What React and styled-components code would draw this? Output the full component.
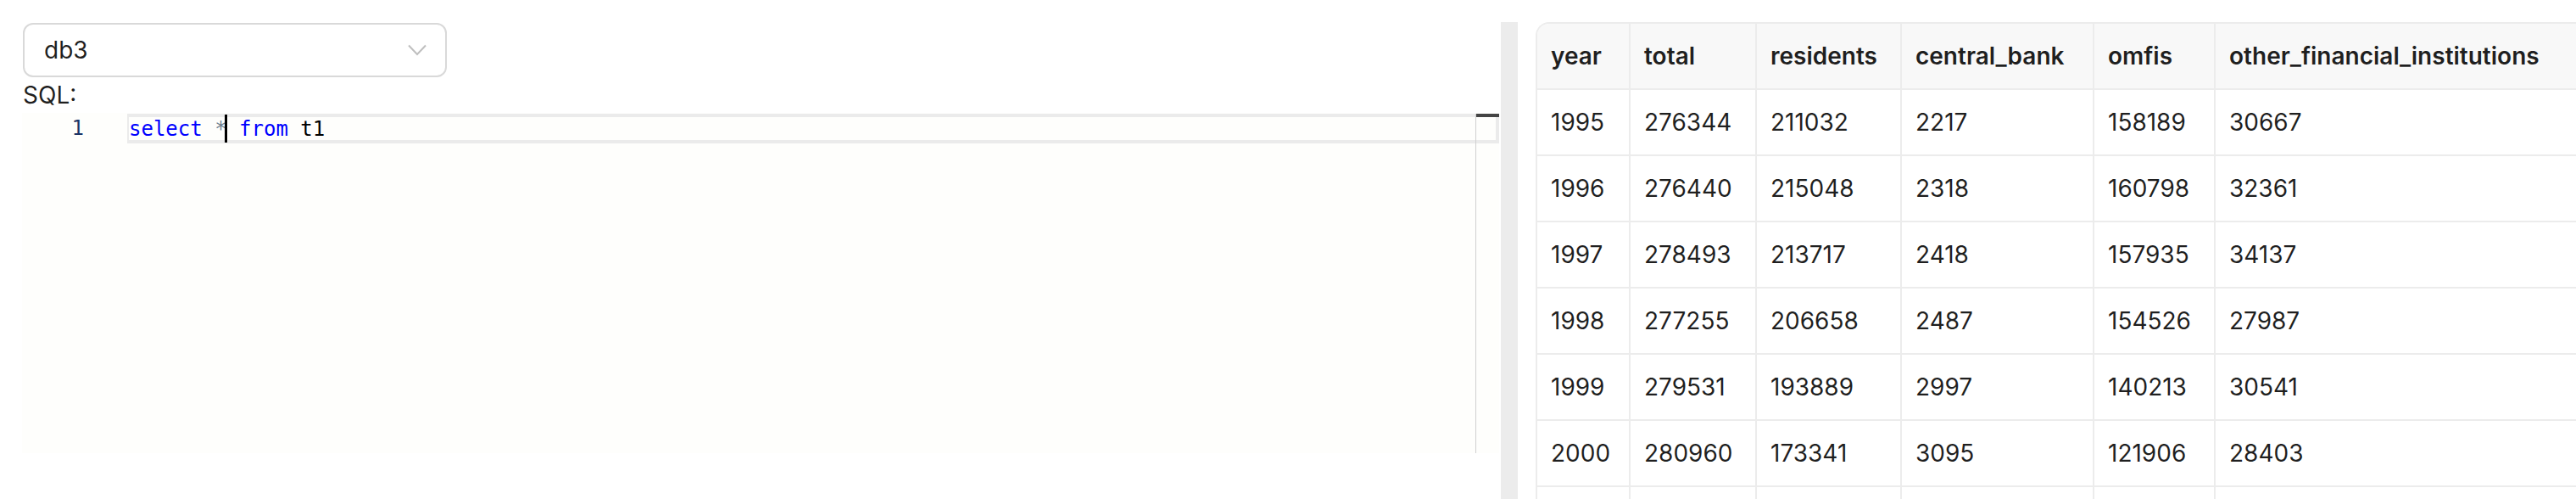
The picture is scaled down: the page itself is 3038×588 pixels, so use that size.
import React from 'react';
import styled, { createGlobalStyle } from 'styled-components';

const GlobalStyle = createGlobalStyle`
  html, body {
    margin: 0;
    padding: 0;
    background: #fff;
  }
  body {
    font-family: Inter, "Liberation Sans", sans-serif;
    color: rgba(0, 0, 0, 0.88);
  }
`;

const Page = styled.div`
  display: flex;
  width: 3038px;
  height: 588px;
  padding-top: 26px;
  box-sizing: border-box;
  overflow: hidden;
`;

const LeftPane = styled.div`
  width: 1770px;
  flex-shrink: 0;
  padding: 0 2px 0 26px;
  box-sizing: border-box;
  display: flex;
  flex-direction: column;
`;

const Select = styled.div`
  width: 500px;
  height: 64px;
  margin: 1px 0 0 1px;
  padding: 0 22px 0 23px;
  box-sizing: border-box;
  border: 2px solid #d9d9d9;
  border-radius: 12px;
  display: flex;
  align-items: center;
  justify-content: space-between;
  font-size: 28px;
  color: rgba(0, 0, 0, 0.88);
`;

const Label = styled.div`
  font-size: 28px;
  line-height: 42px;
  margin-left: 1px;
`;

const Editor = styled.div`
  display: flex;
  height: 400px;
  padding-top: 1px;
  background: #fefefc;
  font-family: "DejaVu Sans Mono", "Liberation Mono", monospace;
  font-size: 24px;
`;

const Gutter = styled.div`
  width: 124px;
  padding-right: 51px;
  box-sizing: border-box;
  text-align: right;
  color: #1c3466;
`;

const GutterCell = styled.div`
  height: 35px;
  line-height: 35px;
`;

const CodeArea = styled.div`
  flex: 1;
  position: relative;
`;

const Line = styled.div`
  height: 35px;
  box-sizing: border-box;
  display: flex;
  align-items: center;
  white-space: pre;
  border-style: solid;
  border-color: ${(p) => (p.$active ? '#ebebeb' : 'transparent')};
  border-width: 4px 4px 4px 2px;
`;

const Token = styled.span`
  color: ${(p) => p.$color};
`;

const Cursor = styled.span`
  display: inline-block;
  width: 3px;
  height: 33px;
  margin-left: -3px;
  background: #000;
  vertical-align: -8px;
`;

const MarginLine = styled.div`
  position: absolute;
  top: 0;
  bottom: 0;
  right: 27px;
  width: 1px;
  background: #d0d0d0;
`;

const ScrollMark = styled.div`
  position: absolute;
  top: 0;
  right: 0;
  width: 27px;
  height: 4px;
  background: #444;
`;

const Divider = styled.div`
  width: 20px;
  flex-shrink: 0;
  background: #ececec;
`;

const RightPane = styled.div`
  flex: 1;
  min-width: 0;
  padding-left: 21px;
  overflow: hidden;
`;

const TableWrap = styled.div`
  width: max-content;
  border-top: 2px solid #ececec;
  border-left: 2px solid #ececec;
  border-top-left-radius: 16px;
  overflow: hidden;
`;

const Table = styled.table`
  border-collapse: separate;
  border-spacing: 0;
  table-layout: fixed;
  font-size: 28px;
  line-height: 40px;
`;

const Th = styled.th`
  width: ${(p) => p.$w}px;
  box-sizing: border-box;
  padding: 18px 16px;
  text-align: left;
  font-weight: 600;
  color: rgba(0, 0, 0, 0.88);
  background: #f8f8f8;
  border-right: 2px solid #ececec;
  border-bottom: 2px solid #ececec;
  white-space: nowrap;
`;

const Td = styled.td`
  padding: 18px 16px;
  height: 40px;
  border-right: 2px solid #ececec;
  border-bottom: 2px solid #ececec;
  white-space: nowrap;
`;

const columns = [
  { key: 'year', w: 110 },
  { key: 'total', w: 149 },
  { key: 'residents', w: 171 },
  { key: 'central_bank', w: 227 },
  { key: 'omfis', w: 143 },
  { key: 'other_financial_institutions', w: 440 },
];

const rows = [
  ['1995', '276344', '211032', '2217', '158189', '30667'],
  ['1996', '276440', '215048', '2318', '160798', '32361'],
  ['1997', '278493', '213717', '2418', '157935', '34137'],
  ['1998', '277255', '206658', '2487', '154526', '27987'],
  ['1999', '279531', '193889', '2997', '140213', '30541'],
  ['2000', '280960', '173341', '3095', '121906', '28403'],
  ['', '', '', '', '', ''],
];

function Chevron() {
  return (
    <svg width="22" height="14" viewBox="0 0 22 14" fill="none">
      <polyline points="1,1.5 11,12 21,1.5" stroke="#bfbfbf" strokeWidth="2" />
    </svg>
  );
}

export default function App() {
  return (
    <>
      <GlobalStyle />
      <Page>
        <LeftPane>
          <Select>
            <span>db3</span>
            <Chevron />
          </Select>
          <Label>SQL:</Label>
          <Editor>
            <Gutter>
              <GutterCell>1</GutterCell>
            </Gutter>
            <CodeArea>
              <Line $active>
                <span>
                  <Token $color="#0000ff">select</Token>
                  {' '}
                  <Token $color="#708090">*</Token>
                  <Cursor />
                  {' '}
                  <Token $color="#0000ff">from</Token>
                  {' '}
                  <Token $color="#000">t1</Token>
                </span>
              </Line>
              <MarginLine />
              <ScrollMark />
            </CodeArea>
          </Editor>
        </LeftPane>
        <Divider />
        <RightPane>
          <TableWrap>
            <Table>
              <thead>
                <tr>
                  {columns.map((c) => (
                    <Th key={c.key} $w={c.w}>{c.key}</Th>
                  ))}
                </tr>
              </thead>
              <tbody>
                {rows.map((r, i) => (
                  <tr key={i}>
                    {r.map((v, j) => (
                      <Td key={j}>{v}</Td>
                    ))}
                  </tr>
                ))}
              </tbody>
            </Table>
          </TableWrap>
        </RightPane>
      </Page>
    </>
  );
}
